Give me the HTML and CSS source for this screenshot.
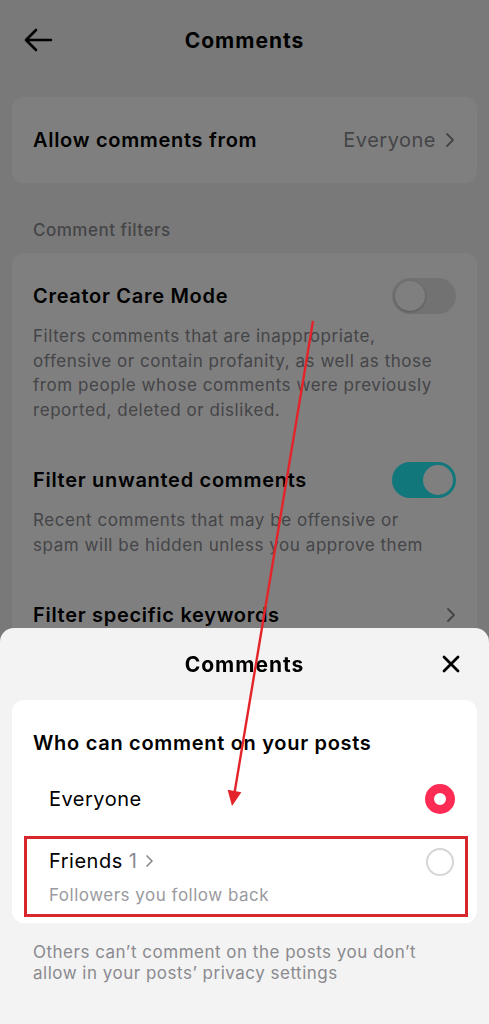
FILE: index.html
```html
<!DOCTYPE html>
<html>
<head>
    <title>Comments</title>
    <link rel="stylesheet" href="styles.css">
</head>
<body>
    <div class="page">
        <div class="topbar">
            <svg class="back" width="30" height="24" viewBox="0 0 30 24">
                <path d="M28 12H3M13 2L3 12l10 10" fill="none" stroke="#000" stroke-width="2.6" stroke-linecap="round" stroke-linejoin="round"/>
            </svg>
            <div class="topbar-title">Comments</div>
        </div>

        <div class="card">
            <div class="row link-row">
                <span class="row-title">Allow comments from</span>
                <span class="row-value">Everyone
                    <svg class="chev" width="10" height="16" viewBox="0 0 10 16"><path d="M2 2l6 6-6 6" fill="none" stroke="#8a8a8f" stroke-width="1.8" stroke-linecap="round" stroke-linejoin="round"/></svg>
                </span>
            </div>
        </div>

        <div class="section-label">Comment filters</div>

        <div class="card filters">
            <div class="filter">
                <div class="row">
                    <span class="row-title">Creator Care Mode</span>
                    <span class="toggle"></span>
                </div>
                <p class="desc">Filters comments that are inappropriate, offensive or contain profanity, as well as those from people whose comments were previously reported, deleted or disliked.</p>
            </div>
            <div class="filter">
                <div class="row">
                    <span class="row-title">Filter unwanted comments</span>
                    <span class="toggle on"></span>
                </div>
                <p class="desc">Recent comments that may be offensive or spam will be hidden unless you approve them</p>
            </div>
            <div class="filter">
                <div class="row">
                    <span class="row-title">Filter specific keywords</span>
                    <svg class="chev" width="10" height="16" viewBox="0 0 10 16"><path d="M2 2l6 6-6 6" fill="none" stroke="#8a8a8f" stroke-width="1.8" stroke-linecap="round" stroke-linejoin="round"/></svg>
                </div>
                <p class="desc">Hide comments that contain the keywords you choose</p>
            </div>
        </div>
    </div>

    <div class="dim"></div>

    <div class="sheet">
        <div class="sheet-head">
            <div class="sheet-title">Comments</div>
            <svg class="close" width="18" height="18" viewBox="0 0 18 18">
                <path d="M2 2l14 14M16 2L2 16" stroke="#000" stroke-width="2.8" stroke-linecap="round"/>
            </svg>
        </div>

        <div class="sheet-card">
            <div class="sheet-question">Who can comment on your posts</div>
            <div class="option">
                <span class="option-name">Everyone</span>
                <span class="radio checked"></span>
            </div>
            <div class="option marked">
                <div>
                    <div class="option-name">Friends <span class="count">1
                        <svg width="9" height="14" viewBox="0 0 9 14"><path d="M2 2l5 5-5 5" fill="none" stroke="#8a8a8f" stroke-width="1.7" stroke-linecap="round" stroke-linejoin="round"/></svg></span></div>
                    <div class="option-sub">Followers you follow back</div>
                </div>
                <span class="radio"></span>
            </div>
        </div>

        <p class="sheet-note">Others can’t comment on the posts you don’t allow in your posts’ privacy settings</p>
    </div>

    <!-- annotation arrow -->
    <svg class="pointer" width="489" height="1024" viewBox="0 0 489 1024">
        <line x1="313" y1="321" x2="234.5" y2="793" stroke="#e3242b" stroke-width="2.4"/>
        <polygon points="232,806 241.4,792.2 227.6,789.8" fill="#e3242b"/>
    </svg>
</body>
</html>
```

FILE: styles.css
```css
body {
    margin: 0;
    font-family: Inter, "Noto Sans", sans-serif;
    letter-spacing: 0.5px;
    color: #161823;
    background: #f3f3f3;
    overflow: hidden;
}
.page { width: 489px; height: 1024px; }

.topbar {
    position: relative;
    height: 80px;
    display: flex;
    align-items: center;
    justify-content: center;
}
.back { position: absolute; left: 23px; top: 28px; }
.topbar-title { font-size: 21px; font-weight: 700; color: #000; letter-spacing: 1px; }

.card {
    background: #fff;
    border-radius: 12px;
    margin: 17px 12px 0;
}
.row {
    display: flex;
    align-items: center;
    justify-content: space-between;
}
.link-row { height: 86px; padding: 0 22px 0 21px; }
.row-title { font-size: 20px; font-weight: 600; color: #000; letter-spacing: 0.7px; }
.row-value {
    display: flex;
    align-items: center;
    gap: 9px;
    font-size: 20px;
    color: #8a8a8f;
}

.section-label {
    font-size: 17px;
    font-weight: 500;
    color: #8a8a8f;
    padding: 35px 33px 0;
    line-height: 24px;
}

.filters { margin-top: 11px; padding: 25px 21px 40px; }
.filter + .filter { margin-top: 40px; }
.filter .row { height: 36px; }
.desc {
    margin: 10px 0 0;
    padding-right: 10px;
    font-size: 17px;
    line-height: 24.5px;
    color: #8a8a8f;
    letter-spacing: 0.55px;
}

.toggle {
    width: 64px;
    height: 36px;
    border-radius: 18px;
    background: #e5e5e7;
    position: relative;
    flex: none;
}
.toggle::after {
    content: "";
    position: absolute;
    left: 3px;
    top: 3px;
    width: 30px;
    height: 30px;
    border-radius: 50%;
    background: #fff;
    box-shadow: 0 1px 3px rgba(0,0,0,0.25);
}
.toggle.on { background: #25eef6; }
.toggle.on::after { left: 31px; box-shadow: none; }

.dim {
    position: fixed;
    inset: 0;
    background: rgba(0, 0, 0, 0.5);
}

.sheet {
    position: fixed;
    left: 0;
    right: 0;
    bottom: 0;
    height: 396px;
    background: #f3f3f3;
    border-radius: 14px 14px 0 0;
}
.sheet-head {
    position: relative;
    height: 72px;
    display: flex;
    align-items: center;
    justify-content: center;
}
.sheet-title { font-size: 21px; font-weight: 700; color: #000; letter-spacing: 1px; }
.close { position: absolute; right: 29px; top: 27px; }

.sheet-card {
    background: #fff;
    border-radius: 12px;
    margin: 0 12px;
    padding: 29px 0 6px;
}
.sheet-question {
    font-size: 20px;
    font-weight: 600;
    color: #000;
    line-height: 28px;
    padding-left: 21px;
    letter-spacing: 0.7px;
}
.option {
    display: flex;
    align-items: center;
    justify-content: space-between;
    margin: 17px 9px 0 12px;
    height: 50px;
    padding: 0 13px 0 25px;
}
.option-name { font-size: 20px; color: #000; line-height: 26px; }
.count { color: #8a8a8f; }
.count svg { margin-left: 1px; }
.option.marked {
    margin-top: 12px;
    height: auto;
    align-items: flex-start;
    border: 3px solid #d7262d;
    padding: 9px 11px 8px 22px;
}
.option-sub {
    margin-top: 10px;
    font-size: 17px;
    line-height: 22px;
    color: #9a9aa0;
}

.radio {
    width: 28px;
    height: 28px;
    border-radius: 50%;
    border: 2px solid #d6d6d8;
    box-sizing: border-box;
    flex: none;
}
.radio.checked {
    width: 30px;
    height: 30px;
    border: 9px solid #fe2c55;
    background: #fff;
}

.sheet-note {
    margin: 19px 0 0;
    padding: 0 33px;
    font-size: 17px;
    line-height: 21px;
    color: #8a8a8f;
}

.pointer { position: fixed; left: 0; top: 0; pointer-events: none; }
```
